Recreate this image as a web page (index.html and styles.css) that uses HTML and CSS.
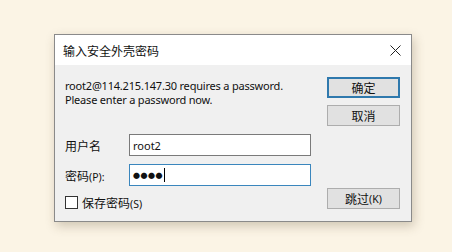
FILE: index.html
```html
<!DOCTYPE html>
<html>
<head>
<meta charset="utf-8">
<link rel="stylesheet" href="styles.css">
</head>
<body>
<div class="dialog">
  <div class="titlebar">
    <span class="title">输入安全外壳密码</span>
    <svg class="close" width="11" height="11" viewBox="0 0 11 11"><path d="M0.5 0.5 L10.5 10.5 M10.5 0.5 L0.5 10.5" stroke="#222" stroke-width="1" fill="none"/></svg>
  </div>
  <div class="content">
    <div class="left">
      <div class="msg">
        <div class="line">root2@114.215.147.30 requires a password.</div>
        <div class="line">Please enter a password now.</div>
      </div>
      <div class="row user">
        <span class="label">用户名</span>
        <div class="input">root2</div>
      </div>
      <div class="row pass">
        <span class="label">密码<span class="lat">(P):</span></span>
        <div class="input focus"><span class="dots">●●●●</span><span class="caret"></span></div>
      </div>
      <div class="check">
        <span class="box"></span>
        <span class="clabel">保存密码<span class="lat">(S)</span></span>
      </div>
    </div>
    <div class="right">
      <div class="btn default">确定</div>
      <div class="btn cancel">取消</div>
      <div class="btn skip">跳过<span class="lat">(K)</span></div>
    </div>
  </div>
</div>
</body>
</html>
```
FILE: styles.css
```css
html, body {
  margin: 0;
  padding: 0;
}
body {
  width: 452px;
  height: 252px;
  background: #fbf4e5;
  padding: 34px 0 0 54px;
  box-sizing: border-box;
  font-family: "Noto Sans", "Noto Sans CJK SC", sans-serif;
  font-size: 11px;
  color: #111;
}
.dialog {
  width: 358px;
  height: 188px;
  box-sizing: border-box;
  border: 1px solid #8a8a8a;
  background: #f0f0f0;
  box-shadow: 2px 4px 10px rgba(80, 60, 30, 0.25);
  display: flex;
  flex-direction: column;
}
.titlebar {
  height: 30px;
  background: #ffffff;
  display: flex;
  align-items: center;
  justify-content: space-between;
  padding: 0 10px 0 8px;
}
.title {
  font-family: "Noto Sans CJK SC", sans-serif;
  font-size: 12px;
  color: #111;
  margin-top: 1px;
}
.close {
  display: block;
  margin-top: 1px;
}
.content {
  display: flex;
  padding: 12px 0 0 10px;
}
.left {
  width: 247px;
  display: flex;
  flex-direction: column;
}
.msg {
  margin-top: 2px;
  display: flex;
  flex-direction: column;
}
.line {
  height: 14px;
  line-height: 14px;
  font-size: 11px;
  letter-spacing: -0.2px;
  white-space: nowrap;
}
.row {
  display: flex;
  align-items: center;
}
.user {
  margin-top: 27px;
}
.pass {
  margin-top: 8px;
}
.label {
  width: 64px;
  font-family: "Noto Sans CJK SC", sans-serif;
  font-size: 12px;
}
.lat {
  font-family: "Noto Sans", sans-serif;
  font-size: 10.5px;
}
.input {
  width: 182px;
  height: 22px;
  box-sizing: border-box;
  border: 1px solid #7a7a7a;
  background: #fff;
  padding: 0 3px;
  display: flex;
  align-items: center;
  font-size: 11px;
}
.input.focus {
  border-color: #3a86bd;
}
.dots {
  font-size: 7px;
  letter-spacing: 0.5px;
  color: #111;
}
.caret {
  width: 1px;
  height: 14px;
  background: #000;
  margin-left: 1px;
}
.check {
  display: flex;
  align-items: center;
  margin-top: 8px;
}
.box {
  width: 13px;
  height: 13px;
  box-sizing: border-box;
  border: 1px solid #333;
  background: #fff;
  margin-right: 4px;
}
.clabel {
  font-family: "Noto Sans CJK SC", sans-serif;
  font-size: 12px;
}
.right {
  margin-left: 15px;
  display: flex;
  flex-direction: column;
}
.btn {
  width: 73px;
  height: 21px;
  box-sizing: border-box;
  border: 1px solid #adadad;
  background: #e1e1e1;
  display: flex;
  align-items: center;
  justify-content: center;
  font-family: "Noto Sans CJK SC", sans-serif;
  font-size: 12px;
}
.btn.default {
  border: 2px solid #2f79ad;
}
.btn.cancel {
  margin-top: 7px;
}
.btn.skip {
  margin-top: 62px;
}
```
